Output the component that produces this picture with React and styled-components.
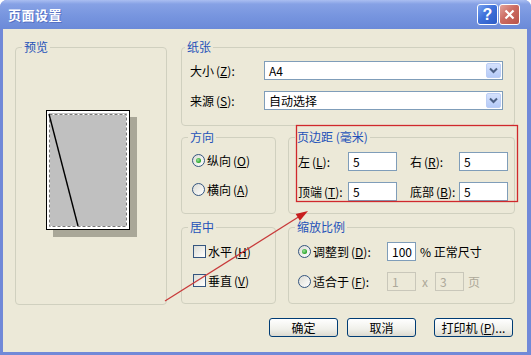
import React from 'react'
import styled, { createGlobalStyle } from 'styled-components'

const GlobalStyle = createGlobalStyle`
  html, body {
    margin: 0;
    padding: 0;
    background: #ffffff;
  }
  body {
    font-family: "Noto Sans CJK SC", "Noto Sans", sans-serif;
    font-size: 12px;
    color: #000;
  }
`;

function Key({ k }) {
  return (
    <KeyWrap>(<u>{k}</u>)</KeyWrap>
  )
}

function Select({ value }) {
  return (
    <SelectBox>
      <SelectValue>{value}</SelectValue>
      <DropButton>
        <svg width='9' height='7' viewBox='0 0 9 7'>
          <path d='M1 1.5 L4.5 5 L8 1.5' fill='none' stroke='#4d6185' strokeWidth='2' />
        </svg>
      </DropButton>
    </SelectBox>
  )
}

function PagePreview() {
  return (
    <svg width='92' height='128' viewBox='0 0 92 128'>
      <rect x='7' y='7' width='84' height='120' fill='#a9a798' />
      <rect x='0.5' y='0.5' width='83' height='119' fill='#fff' stroke='#000' />
      <rect x='3' y='3' width='78' height='114' fill='#c0c0c0' />
      <rect x='3.5' y='4.5' width='77' height='112' fill='none' stroke='#fff' />
      <rect x='3.5' y='4.5' width='77' height='112' fill='none' stroke='#777' strokeDasharray='3 2' />
      <line x1='3' y1='4' x2='32' y2='116' stroke='#000' strokeWidth='1.4' />
    </svg>
  )
}

function Annotation() {
  return (
    <Overlay width='531' height='355' viewBox='0 0 531 355'>
      <rect x='296.5' y='125.5' width='221' height='76' fill='none' stroke='#d0282c' strokeWidth='1.3' />
      <line x1='165' y1='301' x2='300' y2='216' stroke='#c83a3a' strokeWidth='1.3' />
      <polygon points='308,211 299.9,220.8 295.7,214' fill='#c81e1e' />
    </Overlay>
  )
}

function App() {
  return (
    <>
      <GlobalStyle />
      <Window>
        <TitleBar>
          <Title>页面设置</Title>
          <CaptionButton>?</CaptionButton>
          <CaptionButton $close>
            <svg width='11' height='11' viewBox='0 0 11 11'>
              <path d='M1.5 1.5 L9.5 9.5 M9.5 1.5 L1.5 9.5' stroke='#fff' strokeWidth='2.2' />
            </svg>
          </CaptionButton>
        </TitleBar>

        <Body>
          <Main>
            <Group $h={265} $pt={56}>
              <Legend>预览</Legend>
              <PreviewHolder>
                <PagePreview />
              </PreviewHolder>
            </Group>

            <RightColumn>
              <Group $h={86} $pt={7}>
                <Legend $ml={3}>纸张</Legend>
                <Content $pl={8} $pr={11} $gap={11}>
                  <FieldRow>
                    <FieldLabel $w={74}>大小<Key k='Z' />:</FieldLabel>
                    <Select value='A4' />
                  </FieldRow>
                  <FieldRow>
                    <FieldLabel $w={74}>来源<Key k='S' />:</FieldLabel>
                    <Select value='自动选择' />
                  </FieldRow>
                </Content>
              </Group>

              <SplitRow>
                <Group $h={84} $pt={6}>
                  <Legend>方向</Legend>
                  <Content $pl={10} $gap={9}>
                    <OptionRow>
                      <Radio $checked />
                      <span>纵向<Key k='O' /></span>
                    </OptionRow>
                    <OptionRow>
                      <Radio />
                      <span>横向<Key k='A' /></span>
                    </OptionRow>
                  </Content>
                </Group>

                <Group $h={84} $pt={8}>
                  <Legend>页边距 (毫米)</Legend>
                  <Content $pl={9} $pr={7} $gap={11}>
                    <FieldRow>
                      <Pair>
                        <FieldLabel $w={50}>左<Key k='L' />:</FieldLabel>
                        <TextBox $w={49}>5</TextBox>
                      </Pair>
                      <Pair $ml={13}>
                        <FieldLabel $w={49}>右<Key k='R' />:</FieldLabel>
                        <TextBox $w={49}>5</TextBox>
                      </Pair>
                    </FieldRow>
                    <FieldRow>
                      <Pair>
                        <FieldLabel $w={50}>顶端<Key k='T' />:</FieldLabel>
                        <TextBox $w={49}>5</TextBox>
                      </Pair>
                      <Pair $ml={13}>
                        <FieldLabel $w={49}>底部<Key k='B' />:</FieldLabel>
                        <TextBox $w={49}>5</TextBox>
                      </Pair>
                    </FieldRow>
                  </Content>
                </Group>
              </SplitRow>

              <SplitRow>
                <Group $h={84} $pt={7}>
                  <Legend>居中</Legend>
                  <Content $pl={11} $gap={9}>
                    <OptionRow>
                      <Check />
                      <span>水平<Key k='H' /></span>
                    </OptionRow>
                    <OptionRow>
                      <Check />
                      <span>垂直<Key k='V' /></span>
                    </OptionRow>
                  </Content>
                </Group>

                <Group $h={84} $pt={8}>
                  <Legend>缩放比例</Legend>
                  <Content $pl={9} $pr={7} $gap={11}>
                    <FieldRow>
                      <ScaleOption>
                        <Radio $checked />
                        <span>调整到<Key k='D' />:</span>
                      </ScaleOption>
                      <TextBox $w={29}>100</TextBox>
                      <Unit $ml={4}>% 正常尺寸</Unit>
                    </FieldRow>
                    <FieldRow>
                      <ScaleOption>
                        <Radio />
                        <span>适合于<Key k='F' />:</span>
                      </ScaleOption>
                      <TextBox $w={29} $disabled>1</TextBox>
                      <Unit $ml={6} $dim>x</Unit>
                      <TextBox $w={29} $disabled $ml={7}>3</TextBox>
                      <Unit $ml={4} $dim>页</Unit>
                    </FieldRow>
                  </Content>
                </Group>
              </SplitRow>
            </RightColumn>
          </Main>

          <ButtonRow>
            <Button>确定</Button>
            <Button $ml={9}>取消</Button>
            <Button $ml={18} $w={79}>打印机<Key k='P' />...</Button>
          </ButtonRow>
        </Body>

        <Annotation />
      </Window>
    </>
  )
}

const Window = styled.div`
  position: relative;
  width: 531px;
  height: 355px;
  display: flex;
  flex-direction: column;
  background: #7189d8;
  border-radius: 7px 7px 0 0;
  overflow: hidden;
`;

const TitleBar = styled.div`
  flex: none;
  height: 29px;
  display: flex;
  align-items: center;
  gap: 1px;
  padding: 0 11px 0 8px;
  background: linear-gradient(#aabef1 0%, #86a1e5 14%, #7795df 55%, #6b8ad8 100%);
`;

const Title = styled.div`
  flex: 1;
  color: #ffffff;
  font-size: 13px;
  font-weight: bold;
  letter-spacing: 0.5px;
  text-shadow: 1px 1px 0 #5570c4;
`;

const CaptionButton = styled.div`
  width: 21px;
  height: 21px;
  box-sizing: border-box;
  display: flex;
  align-items: center;
  justify-content: center;
  border: 1px solid #ffffff;
  border-radius: 3px;
  color: #ffffff;
  font-family: "Liberation Sans", Arial, sans-serif;
  font-size: 16px;
  font-weight: bold;
  background: ${p => p.$close
    ? 'linear-gradient(135deg, #e3a49c 0%, #cc6b62 45%, #b9534a 100%)'
    : 'linear-gradient(135deg, #79a2f0 0%, #3f71da 45%, #2d5cc6 100%)'};
`;

const Body = styled.div`
  flex: 1;
  margin: 0 4px 3px 3px;
  padding: 11px 12px 0 12px;
  display: flex;
  flex-direction: column;
  background: #ece9d8;
`;

const Main = styled.div`
  display: grid;
  grid-template-columns: 152px 334px;
  column-gap: 14px;
  align-items: start;
`;

const RightColumn = styled.div`
  display: flex;
  flex-direction: column;
  gap: 4px;

  & > *:last-child {
    margin-top: 2px;
  }
`;

const SplitRow = styled.div`
  display: grid;
  grid-template-columns: 95px 227px;
  column-gap: 12px;
`;

const Group = styled.fieldset`
  box-sizing: border-box;
  height: ${p => p.$h}px;
  min-width: 0;
  margin: 0;
  padding: ${p => p.$pt}px 0 0 0;
  border: 1px solid #d0d0bf;
  border-radius: 4px;
`;

const Legend = styled.legend`
  margin-left: ${p => p.$ml ?? 6}px;
  padding: 0 2px;
  color: #2452b8;
  font-size: 12px;
  line-height: 14px;
`;

const Content = styled.div`
  display: flex;
  flex-direction: column;
  gap: ${p => p.$gap}px;
  padding: 0 ${p => p.$pr || 0}px 0 ${p => p.$pl || 0}px;
`;

const PreviewHolder = styled.div`
  display: flex;
  justify-content: center;
  padding-left: 2px;
`;

const FieldRow = styled.div`
  display: flex;
  align-items: center;
  height: 19px;
`;

const Pair = styled.div`
  display: flex;
  align-items: center;
  margin-left: ${p => p.$ml || 0}px;
`;

const FieldLabel = styled.label`
  flex: none;
  width: ${p => p.$w}px;
  white-space: nowrap;
`;

const KeyWrap = styled.span`
  margin-left: 2px;
`;

const SelectBox = styled.div`
  flex: 1;
  height: 19px;
  box-sizing: border-box;
  display: flex;
  align-items: center;
  padding: 1px;
  background: #ffffff;
  border: 1px solid #7f9db9;
`;

const SelectValue = styled.span`
  flex: 1;
  padding-left: 3px;
`;

const DropButton = styled.span`
  width: 15px;
  height: 15px;
  box-sizing: border-box;
  display: flex;
  align-items: center;
  justify-content: center;
  border: 1px solid #bccef5;
  border-radius: 2px;
  background: linear-gradient(#d5e1fc, #b5cbf8);
`;

const TextBox = styled.div`
  flex: none;
  width: ${p => p.$w}px;
  height: 19px;
  box-sizing: border-box;
  margin-left: ${p => p.$ml || 0}px;
  padding-left: 4px;
  line-height: 17px;
  background: ${p => p.$disabled ? '#ece9d8' : '#ffffff'};
  border: 1px solid ${p => p.$disabled ? '#c9c7ba' : '#7f9db9'};
  color: ${p => p.$disabled ? '#aca899' : '#000000'};
`;

const Unit = styled.span`
  margin-left: ${p => p.$ml || 0}px;
  color: ${p => p.$dim ? '#aca899' : '#000000'};
  white-space: nowrap;
`;

const OptionRow = styled.div`
  display: flex;
  align-items: center;
  gap: 2px;
  height: 20px;
`;

const ScaleOption = styled.div`
  flex: none;
  width: 89px;
  display: flex;
  align-items: center;
  gap: 2px;
`;

const Radio = styled.span`
  flex: none;
  position: relative;
  width: 13px;
  height: 13px;
  box-sizing: border-box;
  border: 1px solid #34557f;
  border-radius: 50%;
  background: linear-gradient(135deg, #dcdcd4, #ffffff);

  &::after {
    content: '';
    display: ${p => p.$checked ? 'block' : 'none'};
    position: absolute;
    left: 3px;
    top: 3px;
    width: 5px;
    height: 5px;
    border-radius: 50%;
    background: radial-gradient(circle at 40% 40%, #9ee29e, #21a121 70%);
  }
`;

const Check = styled.span`
  flex: none;
  width: 13px;
  height: 13px;
  box-sizing: border-box;
  border: 1px solid #34557f;
  background: linear-gradient(135deg, #dcdcd4, #ffffff);
`;

const ButtonRow = styled.div`
  display: flex;
  justify-content: flex-end;
  margin-top: 13px;
  padding-right: 2px;
`;

const Button = styled.div`
  width: ${p => p.$w || 69}px;
  height: 19px;
  box-sizing: border-box;
  margin-left: ${p => p.$ml || 0}px;
  display: flex;
  align-items: center;
  justify-content: center;
  border: 1px solid #003c74;
  border-radius: 3px;
  background: linear-gradient(#ffffff, #f0f0ea 60%, #dcdad0);
  white-space: nowrap;
`;

const Overlay = styled.svg`
  position: absolute;
  left: 0;
  top: 0;
  pointer-events: none;
`;

export default App
